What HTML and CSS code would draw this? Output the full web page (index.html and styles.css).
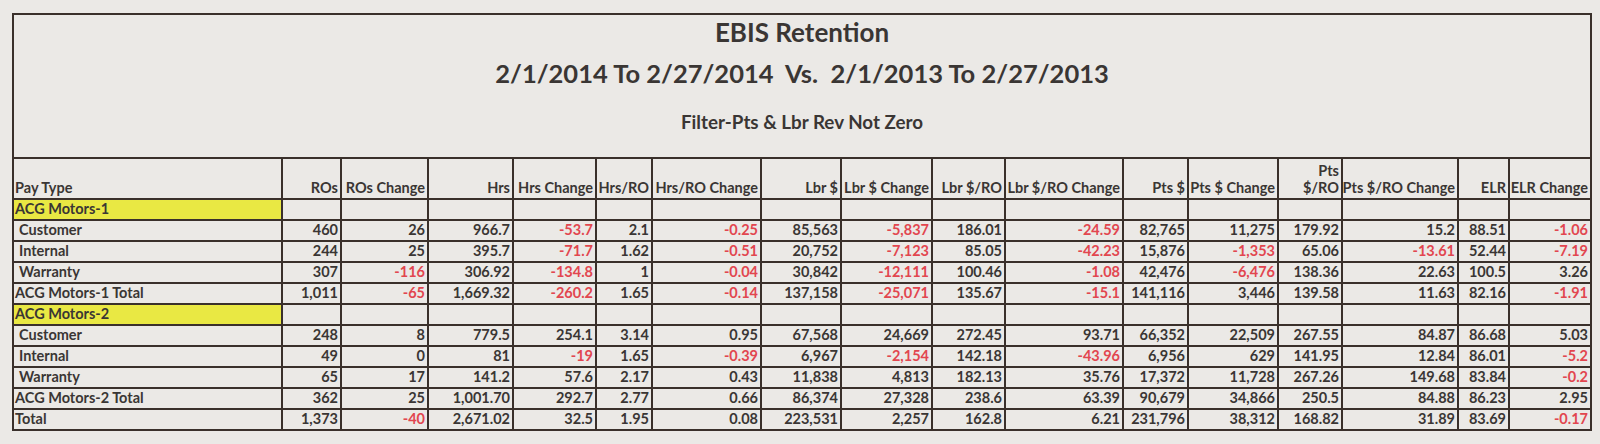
FILE: index.html
```html
<!DOCTYPE html>
<html lang="en">
<head>
<meta charset="utf-8">
<title>EBIS Retention</title>
<link rel="stylesheet" href="styles.css">
</head>
<body>
<div class="page">
  <div class="sheet">
    <div class="title-cell">
      <div class="t1">EBIS Retention</div>
      <div class="t2">2/1/2014 To 2/27/2014  Vs.  2/1/2013 To 2/27/2013</div>
      <div class="t3">Filter-Pts &amp; Lbr Rev Not Zero</div>
    </div>

    <div class="hd lbl">Pay Type</div>
    <div class="hd">ROs</div>
    <div class="hd">ROs Change</div>
    <div class="hd">Hrs</div>
    <div class="hd">Hrs Change</div>
    <div class="hd">Hrs/RO</div>
    <div class="hd">Hrs/RO Change</div>
    <div class="hd">Lbr $</div>
    <div class="hd">Lbr $ Change</div>
    <div class="hd">Lbr $/RO</div>
    <div class="hd">Lbr $/RO Change</div>
    <div class="hd">Pts $</div>
    <div class="hd">Pts $ Change</div>
    <div class="hd">Pts<br>$/RO</div>
    <div class="hd">Pts $/RO Change</div>
    <div class="hd">ELR</div>
    <div class="hd">ELR Change</div>

    <div class="c lbl grp">ACG Motors-1</div>
    <div class="c"></div><div class="c"></div><div class="c"></div><div class="c"></div><div class="c"></div><div class="c"></div><div class="c"></div><div class="c"></div><div class="c"></div><div class="c"></div><div class="c"></div><div class="c"></div><div class="c"></div><div class="c"></div><div class="c"></div><div class="c"></div>

    <div class="c lbl sub">Customer</div>
    <div class="c">460</div><div class="c">26</div><div class="c">966.7</div><div class="c neg">-53.7</div><div class="c">2.1</div><div class="c neg">-0.25</div><div class="c">85,563</div><div class="c neg">-5,837</div><div class="c">186.01</div><div class="c neg">-24.59</div><div class="c">82,765</div><div class="c">11,275</div><div class="c">179.92</div><div class="c">15.2</div><div class="c">88.51</div><div class="c neg">-1.06</div>

    <div class="c lbl sub">Internal</div>
    <div class="c">244</div><div class="c">25</div><div class="c">395.7</div><div class="c neg">-71.7</div><div class="c">1.62</div><div class="c neg">-0.51</div><div class="c">20,752</div><div class="c neg">-7,123</div><div class="c">85.05</div><div class="c neg">-42.23</div><div class="c">15,876</div><div class="c neg">-1,353</div><div class="c">65.06</div><div class="c neg">-13.61</div><div class="c">52.44</div><div class="c neg">-7.19</div>

    <div class="c lbl sub">Warranty</div>
    <div class="c">307</div><div class="c neg">-116</div><div class="c">306.92</div><div class="c neg">-134.8</div><div class="c">1</div><div class="c neg">-0.04</div><div class="c">30,842</div><div class="c neg">-12,111</div><div class="c">100.46</div><div class="c neg">-1.08</div><div class="c">42,476</div><div class="c neg">-6,476</div><div class="c">138.36</div><div class="c">22.63</div><div class="c">100.5</div><div class="c">3.26</div>

    <div class="c lbl">ACG Motors-1 Total</div>
    <div class="c">1,011</div><div class="c neg">-65</div><div class="c">1,669.32</div><div class="c neg">-260.2</div><div class="c">1.65</div><div class="c neg">-0.14</div><div class="c">137,158</div><div class="c neg">-25,071</div><div class="c">135.67</div><div class="c neg">-15.1</div><div class="c">141,116</div><div class="c">3,446</div><div class="c">139.58</div><div class="c">11.63</div><div class="c">82.16</div><div class="c neg">-1.91</div>

    <div class="c lbl grp">ACG Motors-2</div>
    <div class="c"></div><div class="c"></div><div class="c"></div><div class="c"></div><div class="c"></div><div class="c"></div><div class="c"></div><div class="c"></div><div class="c"></div><div class="c"></div><div class="c"></div><div class="c"></div><div class="c"></div><div class="c"></div><div class="c"></div><div class="c"></div>

    <div class="c lbl sub">Customer</div>
    <div class="c">248</div><div class="c">8</div><div class="c">779.5</div><div class="c">254.1</div><div class="c">3.14</div><div class="c">0.95</div><div class="c">67,568</div><div class="c">24,669</div><div class="c">272.45</div><div class="c">93.71</div><div class="c">66,352</div><div class="c">22,509</div><div class="c">267.55</div><div class="c">84.87</div><div class="c">86.68</div><div class="c">5.03</div>

    <div class="c lbl sub">Internal</div>
    <div class="c">49</div><div class="c">0</div><div class="c">81</div><div class="c neg">-19</div><div class="c">1.65</div><div class="c neg">-0.39</div><div class="c">6,967</div><div class="c neg">-2,154</div><div class="c">142.18</div><div class="c neg">-43.96</div><div class="c">6,956</div><div class="c">629</div><div class="c">141.95</div><div class="c">12.84</div><div class="c">86.01</div><div class="c neg">-5.2</div>

    <div class="c lbl sub">Warranty</div>
    <div class="c">65</div><div class="c">17</div><div class="c">141.2</div><div class="c">57.6</div><div class="c">2.17</div><div class="c">0.43</div><div class="c">11,838</div><div class="c">4,813</div><div class="c">182.13</div><div class="c">35.76</div><div class="c">17,372</div><div class="c">11,728</div><div class="c">267.26</div><div class="c">149.68</div><div class="c">83.84</div><div class="c neg">-0.2</div>

    <div class="c lbl">ACG Motors-2 Total</div>
    <div class="c">362</div><div class="c">25</div><div class="c">1,001.70</div><div class="c">292.7</div><div class="c">2.77</div><div class="c">0.66</div><div class="c">86,374</div><div class="c">27,328</div><div class="c">238.6</div><div class="c">63.39</div><div class="c">90,679</div><div class="c">34,866</div><div class="c">250.5</div><div class="c">84.88</div><div class="c">86.23</div><div class="c">2.95</div>

    <div class="c lbl">Total</div>
    <div class="c">1,373</div><div class="c neg">-40</div><div class="c">2,671.02</div><div class="c">32.5</div><div class="c">1.95</div><div class="c">0.08</div><div class="c">223,531</div><div class="c">2,257</div><div class="c">162.8</div><div class="c">6.21</div><div class="c">231,796</div><div class="c">38,312</div><div class="c">168.82</div><div class="c">31.89</div><div class="c">83.69</div><div class="c neg">-0.17</div>
  </div>
</div>
</body>
</html>
```

FILE: styles.css
```css
* { box-sizing: border-box; }

html, body {
  margin: 0;
  padding: 0;
  background: #ebe9e6;
}

body {
  font-family: Lato, "Open Sans", sans-serif;
  font-weight: 700;
  color: #3a3634;
}

.page {
  padding: 13px 0 0 12px;
}

.sheet {
  display: grid;
  width: 1580px;
  grid-template-columns: 269px 59px 87px 85px 83px 56px 109px 80px 91px 73px 118px 65px 90px 64px 116px 51px 82px;
  grid-template-rows: 144px 41px;
  grid-auto-rows: 21px;
  border-left: 2px solid #3a302b;
  border-top: 2px solid #3a302b;
}

.title-cell {
  grid-column: 1 / -1;
  border-right: 2px solid #3a302b;
  border-bottom: 2px solid #3a302b;
  text-align: center;
  padding-top: 2px;
}

.t1 {
  font-size: 26px;
  line-height: 30px;
}

.t2 {
  font-size: 25.5px;
  line-height: 30px;
  margin-top: 11px;
  white-space: pre;
}

.t3 {
  font-size: 18.8px;
  line-height: 24px;
  margin-top: 22px;
}

.hd,
.c {
  border-right: 2px solid #3a302b;
  border-bottom: 2px solid #3a302b;
  font-size: 14.5px;
  line-height: 17px;
  padding: 0 2px 2px 1px;
  text-align: right;
  white-space: nowrap;
}

.hd {
  display: flex;
  flex-direction: column;
  justify-content: flex-end;
  align-items: flex-end;
}

.c {
  display: flex;
  align-items: flex-end;
  justify-content: flex-end;
}

.lbl {
  text-align: left;
  justify-content: flex-start;
}

.hd.lbl {
  justify-content: flex-end;
  align-items: flex-start;
}

.sub {
  padding-left: 5px;
}

.grp {
  background: #e9e843;
}

.neg {
  color: #e2464f;
}
```
